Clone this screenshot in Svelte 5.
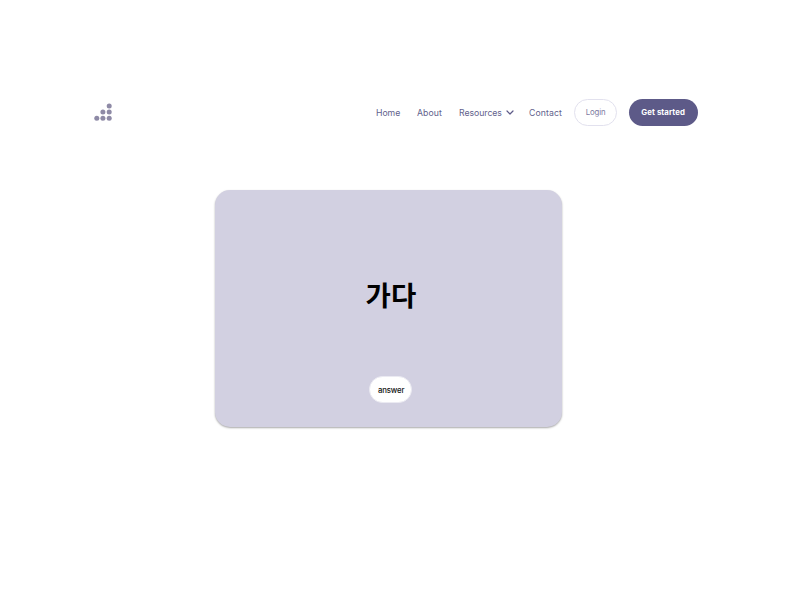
<script>
  const dots = [[15.2, 2.9], [8.9, 9.1], [15.2, 9.1], [2.8, 15.3], [8.9, 15.3], [15.2, 15.3]];
</script>

<div class="page">
  <header>
    <svg class="logo" width="18" height="18" viewBox="0 0 18 18" aria-label="Logo">
      {#each dots as [x, y]}
        <circle cx={x} cy={y} r="2.5" />
      {/each}
    </svg>
    <nav>
      <a class="home" href="#home">Home</a>
      <a class="about" href="#about">About</a>
      <a class="resources" href="#resources">
        <span>Resources</span>
        <svg width="8" height="6" viewBox="0 0 8 6"><path d="M1 1 4 4 7 1" /></svg>
      </a>
      <a class="contact" href="#contact">Contact</a>
      <button class="login">Login</button>
      <button class="start">Get started</button>
    </nav>
  </header>
  <main>
    <h1>가다</h1>
    <button class="answer">answer</button>
  </main>
</div>

<style>
  :global(body) { margin: 0; background: #fff; }
  .page {
    width: 792px;
    height: 612px;
    box-sizing: border-box;
    padding-top: 98.6px;
    background: #fff;
    overflow: hidden;
    font-family: Inter, "Noto Sans", sans-serif;
  }
  header {
    height: 27px;
    margin: 0 94.5px 0 94.3px;
    display: flex;
    align-items: center;
    justify-content: space-between;
  }
  .logo { fill: #8e8aa6; }
  nav { display: flex; align-items: center; white-space: nowrap; }
  a {
    color: #625f8c;
    text-decoration: none;
    font-size: 8.7px;
    line-height: 12px;
    padding-top: 1px;
  }
  .home { width: 24.5px; margin-right: 16.5px; letter-spacing: -0.06px; }
  .about { width: 25.5px; margin-right: 16.5px; letter-spacing: 0.06px; }
  .resources { width: 54.7px; margin-right: 15.3px; display: flex; align-items: center; justify-content: space-between; letter-spacing: -0.04px; }
  .contact { width: 33.5px; margin-right: 11.5px; letter-spacing: 0.1px; }
  .resources svg { fill: none; stroke: #5d5a88; stroke-width: 1.2; stroke-linecap: round; stroke-linejoin: round; }
  button {
    box-sizing: border-box;
    height: 27px;
    padding: 0;
    border: 0;
    border-radius: 14px;
    font: 7.8px/12px Inter, "Noto Sans", sans-serif;
    text-align: center;
  }
  .login { width: 43.3px; margin-right: 11.5px; background: #fff; border: 1px solid #e2e1ee; color: #7d7a9f; letter-spacing: -0.1px; }
  .start { width: 68.7px; background: #5d5a88; color: #fff; font-weight: 700; letter-spacing: 0.09px; }
  main {
    width: 347.2px;
    height: 237px;
    box-sizing: border-box;
    margin: 64.4px 0 0 215.3px;
    padding-top: 84.5px;
    padding-left: 4px;
    border-radius: 15px;
    background: #d2d0e1;
    box-shadow: 0 1px 2px rgba(0, 0, 0, 0.34);
    display: flex;
    flex-direction: column;
    align-items: center;
  }
  h1 {
    margin: 0 0 62px;
    color: #000;
    font: 700 27.5px/40px "Noto Sans CJK KR", sans-serif;
  }
  .answer { width: 43px; background: #fff; color: #111; font-size: 7.8px; font-weight: 500; letter-spacing: -0.15px; border: 1px solid #ebeaf2; flex: none; padding: 1px 0 0 0.5px; }
</style>
